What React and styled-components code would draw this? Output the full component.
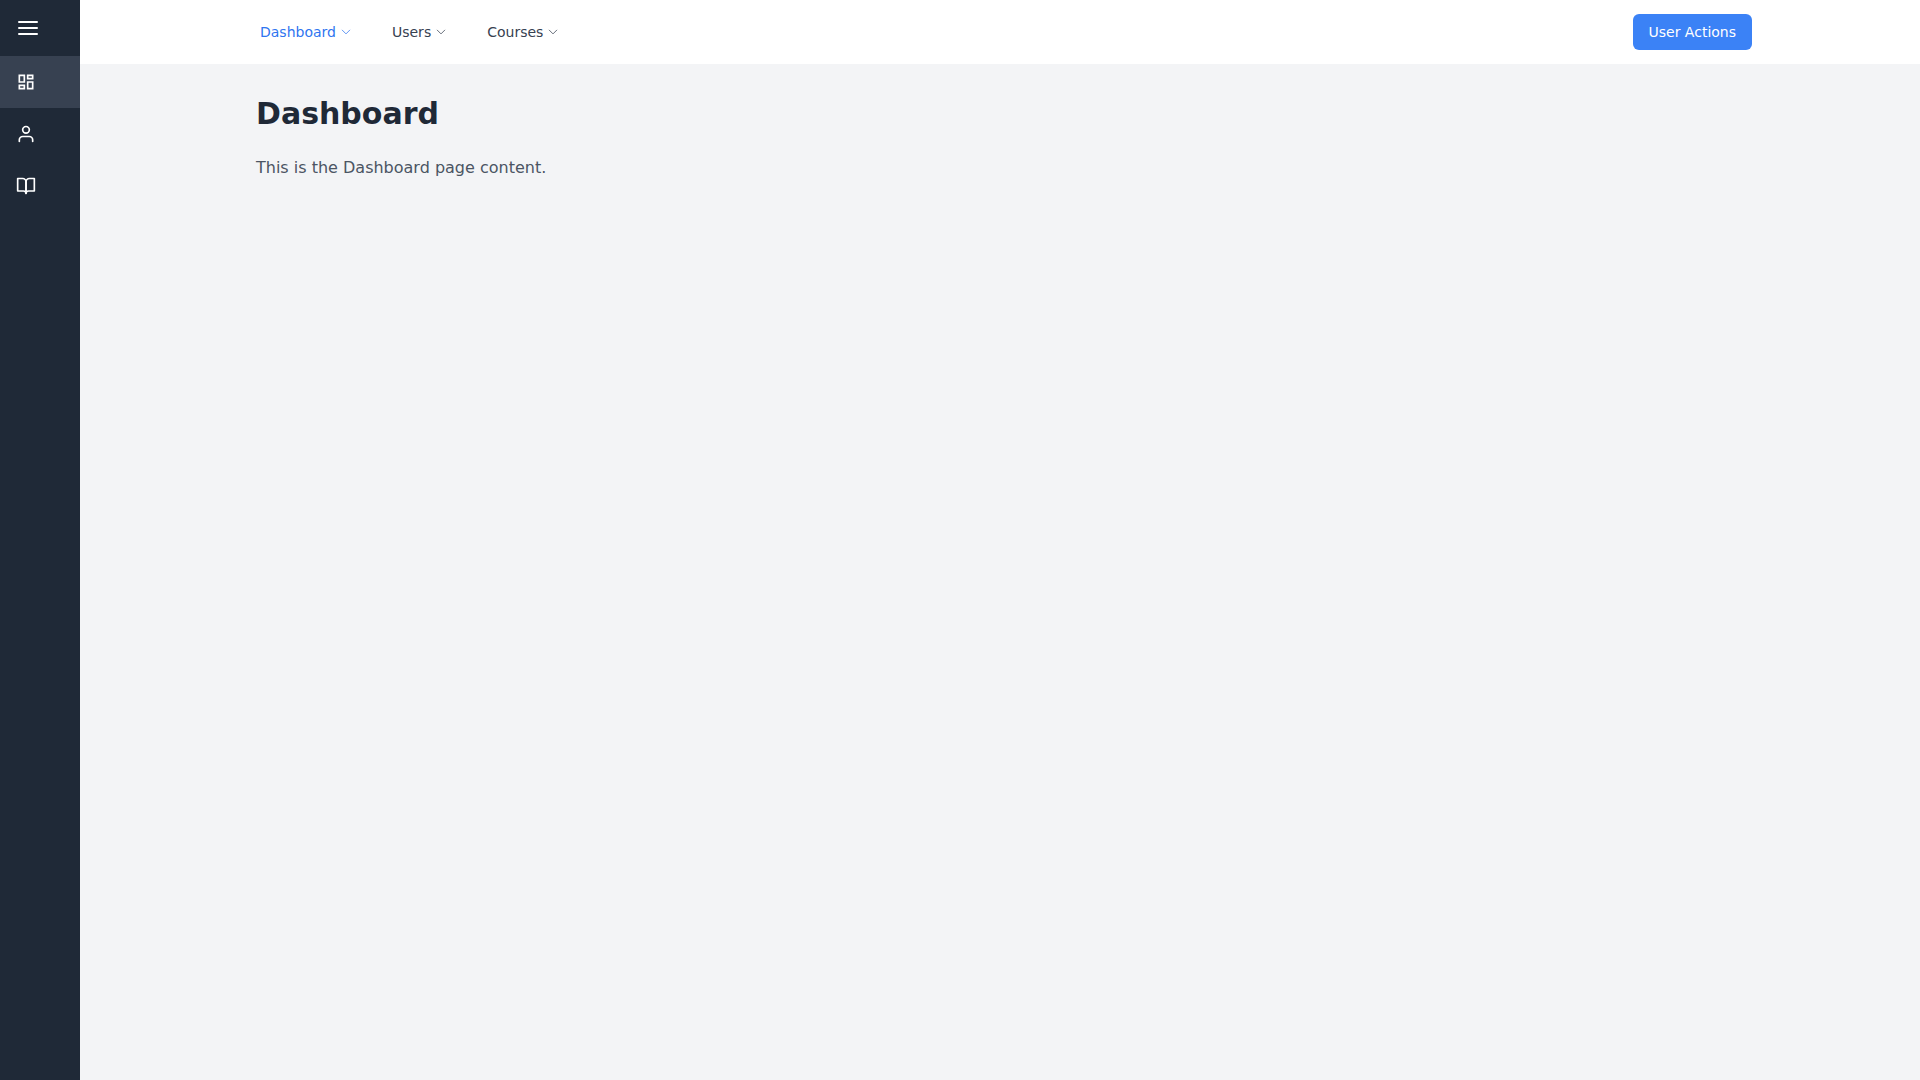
import React from "react";
import styled, { createGlobalStyle } from "styled-components";
import { FiMenu, FiUser, FiBookOpen } from "react-icons/fi";
import { HiOutlineChevronDown } from "react-icons/hi2";
import { MdOutlineDashboard } from "react-icons/md";

const GlobalStyle = createGlobalStyle`
  *, *::before, *::after { box-sizing: border-box; }
  body {
    margin: 0;
    background: #f3f4f6;
    font-family: "DejaVu Sans", sans-serif;
    font-size: 16px;
    line-height: 24px;
  }
  button { font: inherit; border: 0; cursor: pointer; }
  svg { display: block; flex-shrink: 0; }
`;

const Shell = styled.div`
  display: flex;
  min-height: 100vh;
`;

const Sidebar = styled.aside`
  width: 80px;
  flex-shrink: 0;
  background: #1f2937;
  color: #ffffff;
`;

const MenuToggle = styled.button`
  display: block;
  padding: 16px;
  background: transparent;
  color: inherit;
`;

const SideLink = styled.a`
  display: flex;
  align-items: center;
  padding: 16px;
  color: inherit;
  background: ${({ $active }) => ($active ? "#374151" : "transparent")};
`;

const Page = styled.div`
  flex: 1;
  min-width: 0;
`;

const Header = styled.header`
  background: #ffffff;
`;

const HeaderInner = styled.div`
  display: flex;
  align-items: center;
  justify-content: space-between;
  max-width: 1536px;
  height: 64px;
  margin: 0 auto;
  padding: 0 16px;
`;

const Nav = styled.nav`
  display: flex;
  gap: 16px;
`;

const NavButton = styled.button`
  display: flex;
  align-items: center;
  gap: 4px;
  padding: 8px 12px;
  background: transparent;
  font-size: 14px;
  line-height: 20px;
  color: ${({ $active }) => ($active ? "#2f75f0" : "#374151")};
`;

const ActionButton = styled.button`
  padding: 8px 16px;
  border-radius: 6px;
  background: #3b82f6;
  color: #ffffff;
  font-size: 14px;
  line-height: 20px;
`;

const Main = styled.main`
  max-width: 1536px;
  margin: 0 auto;
  padding: 32px 24px;
`;

const Title = styled.h1`
  margin: 0 0 24px;
  font-size: 30px;
  line-height: 36px;
  font-weight: 700;
  color: #1f2937;
`;

const Copy = styled.p`
  margin: 0;
  color: #4b5563;
`;

const sections = [
  { name: "Dashboard", Icon: MdOutlineDashboard },
  { name: "Users", Icon: FiUser },
  { name: "Courses", Icon: FiBookOpen },
];

export default function App() {
  const current = "Dashboard";
  return (
    <>
      <GlobalStyle />
      <Shell>
        <Sidebar>
          <MenuToggle type="button" aria-label="Toggle menu">
            <FiMenu size={24} />
          </MenuToggle>
          <nav aria-label="Sidebar">
            {sections.map(({ name, Icon }) => (
              <SideLink key={name} href="#" aria-label={name} $active={name === current}>
                <Icon size={20} />
              </SideLink>
            ))}
          </nav>
        </Sidebar>
        <Page>
          <Header>
            <HeaderInner>
              <Nav aria-label="Main">
                {sections.map(({ name }) => (
                  <NavButton key={name} type="button" $active={name === current}>
                    {name}
                    <HiOutlineChevronDown size={12} strokeWidth={2} opacity={0.75} />
                  </NavButton>
                ))}
              </Nav>
              <ActionButton type="button">User Actions</ActionButton>
            </HeaderInner>
          </Header>
          <Main>
            <Title>{current}</Title>
            <Copy>This is the {current} page content.</Copy>
          </Main>
        </Page>
      </Shell>
    </>
  );
}
